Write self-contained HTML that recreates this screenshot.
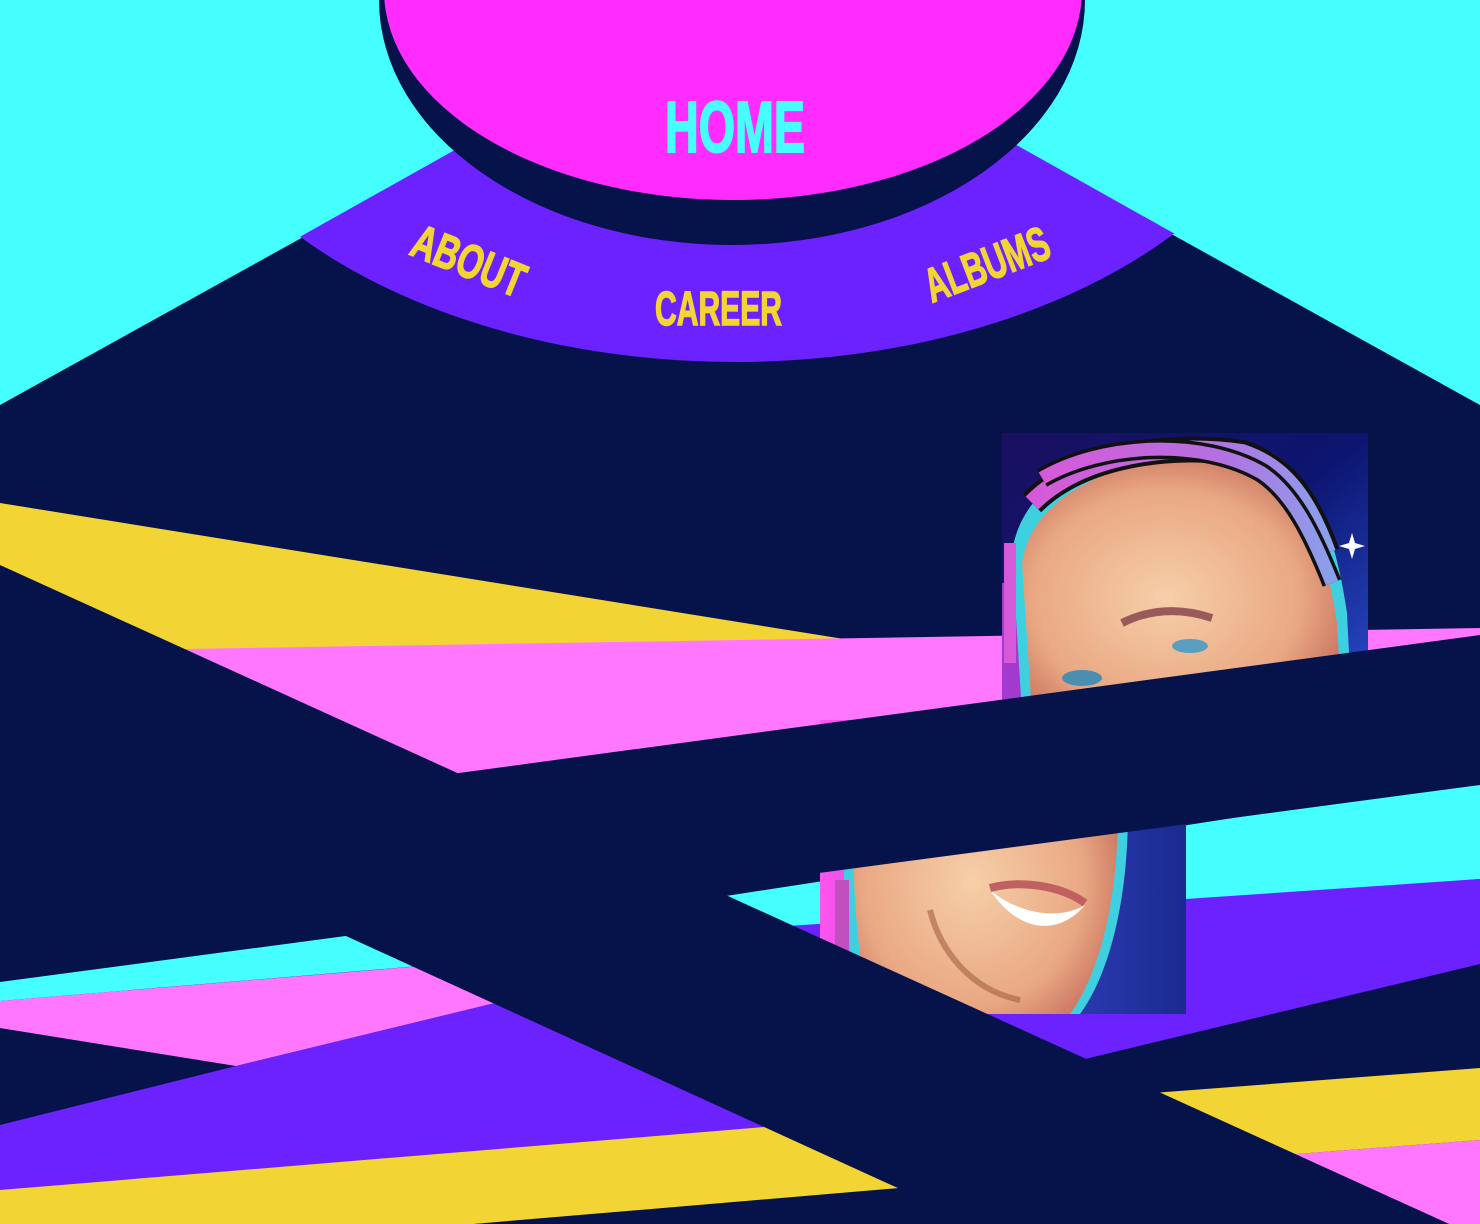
<!DOCTYPE html>
<html><head><meta charset="utf-8">
<style>
html,body{margin:0;padding:0;background:#05134A;width:1480px;height:1224px;overflow:hidden;}
svg{display:block}
text{font-family:"Liberation Sans Narrow","Liberation Sans",sans-serif;font-weight:bold;}
</style></head>
<body>
<svg width="1480" height="1224" viewBox="0 0 1480 1224" xmlns="http://www.w3.org/2000/svg">
<defs>
<clipPath id="tri"><polygon points="0,405 740,-10 1480,405 1480,1224 0,1224"/></clipPath>
<clipPath id="belowA"><polygon points="0,776 1480,1452 0,1452"/></clipPath>
<clipPath id="aboveA"><polygon points="0,567 1480,1240 1480,0 0,0"/></clipPath>
<linearGradient id="bg1" x1="0" y1="0" x2="1" y2="1"><stop offset="0" stop-color="#1a1060"/><stop offset="0.5" stop-color="#0c1570"/><stop offset="1" stop-color="#2a4fd0"/></linearGradient>
<radialGradient id="skin" cx="0.45" cy="0.55" r="0.6"><stop offset="0" stop-color="#f6cfa8"/><stop offset="0.7" stop-color="#e9a883"/><stop offset="1" stop-color="#c9735f"/></radialGradient>
<linearGradient id="braid" x1="0" y1="0" x2="1" y2="0"><stop offset="0" stop-color="#d65ad8"/><stop offset="0.6" stop-color="#b56fe0"/><stop offset="1" stop-color="#8aa0ea"/></linearGradient>
<linearGradient id="bg2" x1="0" y1="0" x2="1" y2="0"><stop offset="0" stop-color="#ff55ee"/><stop offset="0.7" stop-color="#2a3ab0"/><stop offset="1" stop-color="#1a2a90"/></linearGradient>
</defs>
<rect width="1480" height="1224" fill="#05134A"/>
<rect width="1480" height="420" fill="#45FFFF"/>
<polygon points="0,405 740,-5 1480,405 1480,1224 0,1224" fill="#05134A"/>
<g clip-path="url(#tri)">
<ellipse cx="735" cy="0" rx="575" ry="362" fill="#6B22FF"/>
</g>
<ellipse cx="732" cy="0" rx="353" ry="245" fill="#05134A"/>
<ellipse cx="733" cy="-10" rx="349" ry="210" fill="#FF2BFF"/>
<text x="665" y="152" font-size="72" fill="#45FFFF" stroke="#45FFFF" stroke-width="2" textLength="140" lengthAdjust="spacingAndGlyphs">HOME</text>
<text x="655" y="325" font-size="48" fill="#F2D434" stroke="#F2D434" stroke-width="1.5" textLength="127" lengthAdjust="spacingAndGlyphs">CAREER</text>
<text x="0" y="0" font-size="48" fill="#F2D434" stroke="#F2D434" stroke-width="1.5" textLength="118" lengthAdjust="spacingAndGlyphs" transform="translate(408,254) rotate(22)">ABOUT</text>
<text x="0" y="0" font-size="48" fill="#F2D434" stroke="#F2D434" stroke-width="1.5" textLength="130" lengthAdjust="spacingAndGlyphs" transform="translate(932,303) rotate(-21)">ALBUMS</text>

<g clip-path="url(#aboveA)">
<polygon points="0,503 850,640 190,652 0,652" fill="#F2D434"/>
<polygon points="0,652 1480,628 1480,800 0,850" fill="#FF77FF"/>
<polygon points="700,900 1480,780 1480,879 700,940" fill="#45FFFF"/>
<polygon points="700,932 1480,879 1480,964 1085,1059 700,1150" fill="#6B22FF"/>
<polygon points="1100,1097 1480,1068 1480,1140 1100,1169" fill="#F2D434"/>
<polygon points="1100,1169 1480,1140 1480,1224 1100,1224" fill="#FF77FF"/>
</g>
<g clip-path="url(#belowA)">
<polygon points="0,900 0,835 800,800 800,860 0,1001" fill="#FF77FF"/>
<polygon points="0,940 600,860 600,951 0,1001" fill="#45FFFF"/>
<polygon points="0,1001 700,943 700,1000 491,1004 236,1066 0,1028" fill="#FF77FF"/>
<polygon points="0,1125 236,1066 491,1004 800,930 1000,1100 1000,1160 0,1220" fill="#6B22FF"/>
<polygon points="0,1190 765,1127 1100,1099 1100,1171 0,1264" fill="#F2D434"/>
</g>

<svg x="1002" y="433" width="366" height="280" viewBox="0 0 366 280">
<rect width="366" height="280" fill="url(#bg1)"/>
<rect x="0" y="150" width="40" height="130" fill="#a33ad0"/>
<path d="M10,120 C20,40 120,0 220,5 C300,10 330,80 345,180 L350,280 L20,280 Z" fill="#3fd0e0"/>
<path d="M20,130 C30,60 120,20 220,25 C290,30 320,90 335,190 L340,280 L30,280 Z" fill="url(#skin)"/>
<path d="M30,70 C80,20 170,10 240,20 C270,30 300,50 325,120" stroke="#111" stroke-width="26" fill="none"/>
<path d="M30,70 C80,20 170,10 240,20 C270,30 300,50 325,120" stroke="url(#braid)" stroke-width="18" fill="none"/>
<path d="M40,45 C100,10 200,5 260,40 C290,60 310,100 330,150" stroke="#111" stroke-width="20" fill="none"/>
<path d="M40,45 C100,10 200,5 260,40 C290,60 310,100 330,150" stroke="url(#braid)" stroke-width="13" fill="none"/>
<path d="M8,110 L8,230" stroke="#d65ad8" stroke-width="12"/>
<ellipse cx="80" cy="245" rx="20" ry="8" fill="#4a8fb0"/>
<ellipse cx="188" cy="213" rx="18" ry="7" fill="#5a9fc0"/>
<path d="M120,190 C150,175 180,175 210,185" stroke="#9a5a5a" stroke-width="8" fill="none"/>
<path d="M350,100 l3,10 10,3 -10,3 -3,10 -3,-10 -10,-3 10,-3z" fill="#fff"/>
</svg>

<svg x="820" y="720" width="366" height="294" viewBox="0 0 366 294">
<rect width="366" height="294" fill="url(#bg2)"/>
<path d="M30,0 L300,0 C320,120 300,240 260,294 L40,294 C20,200 20,100 30,0Z" fill="#3fd0e0"/>
<path d="M40,0 L290,0 C310,120 290,240 250,294 L50,294 C30,200 30,100 40,0Z" fill="url(#skin)"/>
<path d="M22,160 L22,280" stroke="#c050c0" stroke-width="14"/>
<path d="M170,170 C200,195 240,200 265,185 C240,215 200,215 170,170Z" fill="#fff"/>
<path d="M170,168 C200,160 240,165 265,183" stroke="#c06060" stroke-width="8" fill="none"/>
<path d="M110,190 C120,230 150,270 200,280" stroke="#a56040" stroke-width="6" fill="none" opacity="0.6"/>
</svg>

<polygon points="0,565 1480,1238 1480,1454 0,778" fill="#05134A"/>
<polygon points="0,835 1480,635 1480,785 0,982" fill="#05134A"/>
</svg>
</body></html>
